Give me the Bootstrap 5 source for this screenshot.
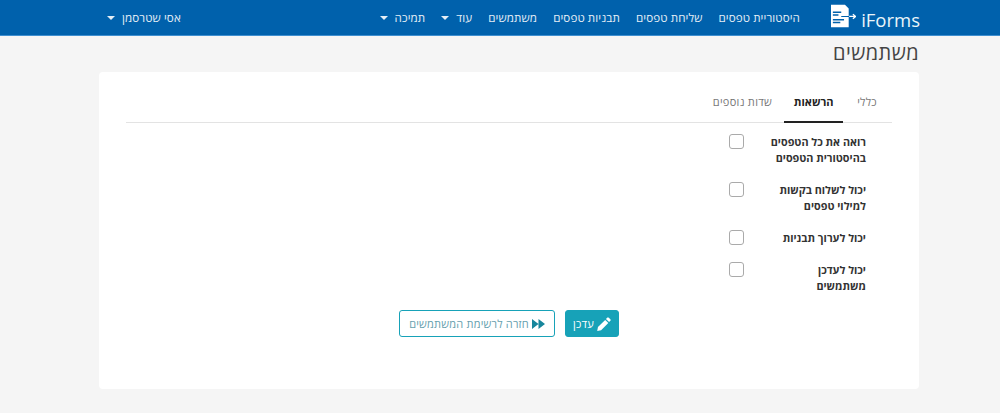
<!DOCTYPE html>
<html lang="he" dir="rtl">
<head>
<meta charset="utf-8">
<title>משתמשים</title>
<link href="https://cdn.jsdelivr.net/npm/bootstrap@5.3.0/dist/css/bootstrap.min.css" rel="stylesheet">
<style>
html,body{height:413px;overflow:hidden}
body{background:#f5f5f5;font-family:"Open Sans","Noto Sans",sans-serif;color:#333;font-size:12px}
.top-bar{background:#0061ac;height:36px;border-bottom:1px solid #3f8fd0;padding:0 80px 0 107px}
.brand{color:#eaf5f9;font-size:18.5px;gap:5px;width:89px;margin-left:31px;line-height:1;text-decoration:none}
.brand svg{margin-bottom:3px}
.brand span{padding-top:6px}
.top-link{color:#e4eef6;font-size:11.6px;letter-spacing:.1px;text-decoration:none;white-space:nowrap}
.caret{display:inline-block;border-top:4px solid #e4eef6;border-left:4px solid transparent;border-right:4px solid transparent;vertical-align:2px;margin-right:7px}
.menu{gap:16px}
.page-wrap{padding:0 81px;margin-left:18px}
.page-title{font-size:20px;font-weight:400;color:#444;margin:5px 0 7px;line-height:24px;letter-spacing:.4px}
.panel{background:#fff;border-radius:4px;height:317px;padding:15px 27px 0 27px}
.tabs-row{border-bottom:1px solid #e3e3e3;height:36px}
.tab-item{font-size:11px;color:#777;padding:7px 11px 0;text-decoration:none;height:36px;letter-spacing:.3px}
.tab-item:first-child{padding-right:15px;padding-left:14px}
.tab-item.on{color:#222;font-weight:700;border-bottom:2px solid #222;padding:7px 0 0;margin-left:1px;width:59px;text-align:center;letter-spacing:0}
.perm-list{padding:11px 26px 0 0}
.perm{display:flex;margin-bottom:16px}
.perm-name{width:122px;font-weight:700;font-size:10.8px;line-height:16px;color:#333}
.perm-box{width:15px;height:15px;border:1.5px solid #aaa;border-radius:3px;display:block}
.act{font-size:11px;height:27px;display:inline-flex;align-items:center;gap:3px;border-radius:3px;padding:0 7px;line-height:1;text-decoration:none;letter-spacing:.2px}
.act-main{background:#17a2b8;color:#fff;border:1px solid #17a2b8;width:54px;justify-content:center;margin-left:10px}
.act-sec{background:#fff;color:#66a0ae;border:1px solid #17a2b8;width:156px;justify-content:center}
</style>
</head>
<body>
<nav class="top-bar d-flex align-items-center">
  <a class="brand d-flex align-items-center" href="#" dir="ltr">
    <svg width="27" height="24" viewBox="0 0 27 24"><path fill="#fff" d="M0 0h15l4 4v8h-8v1h8v11H0z"/><path stroke="#0061ac" stroke-width="1.500" d="M2 8h9M2 11h6M2 16h12M2 19h8"/><path fill="none" stroke="#fff" stroke-width="1.400" d="M19.500 12.500h7M23.500 10l2.800 2.500-2.800 2.500"/></svg>
    <span>iForms</span>
  </a>
  <div class="menu d-flex align-items-center flex-grow-1">
    <a class="top-link" href="#">היסטוריית טפסים</a>
    <a class="top-link" href="#">שליחת טפסים</a>
    <a class="top-link" href="#">תבניות טפסים</a>
    <a class="top-link" href="#">משתמשים</a>
    <a class="top-link" href="#">עוד<span class="caret"></span></a>
    <a class="top-link" href="#">תמיכה<span class="caret"></span></a>
  </div>
  <a class="top-link" href="#">אסי שטרסמן<span class="caret"></span></a>
</nav>
<main class="page-wrap">
  <h1 class="page-title">משתמשים</h1>
  <section class="panel">
    <div class="tabs-row d-flex">
      <a class="tab-item" href="#">כללי</a>
      <a class="tab-item on" href="#">הרשאות</a>
      <a class="tab-item" href="#">שדות נוספים</a>
    </div>
    <div class="perm-list">
      <div class="perm"><div class="perm-name">רואה את כל הטפסים<br>בהיסטורית הטפסים</div><span class="perm-box"></span></div>
      <div class="perm"><div class="perm-name">יכול לשלוח בקשות<br>למילוי טפסים</div><span class="perm-box"></span></div>
      <div class="perm"><div class="perm-name">יכול לערוך תבניות</div><span class="perm-box"></span></div>
      <div class="perm"><div class="perm-name">יכול לעדכן<br>משתמשים</div><span class="perm-box"></span></div>
    </div>
    <div class="d-flex justify-content-center">
      <a class="act act-main" href="#"><svg width="14" height="14" viewBox="0 0 13 13"><path fill="#fff" d="M9.500.6a1 1 0 0 1 1.400 0l1.500 1.500a1 1 0 0 1 0 1.400l-1.200 1.200-2.900-2.900zM7.600 2.700l2.900 2.900-6.700 6.700-3.600.7.7-3.600z"/></svg>עדכן</a>
      <a class="act act-sec" href="#"><svg width="13" height="10" viewBox="0 0 13 10"><path fill="#17869c" d="M0 0l6.500 5L0 10zM6.500 0L13 5l-6.500 5z"/></svg>חזרה לרשימת המשתמשים</a>
    </div>
  </section>
</main>
</body>
</html>
